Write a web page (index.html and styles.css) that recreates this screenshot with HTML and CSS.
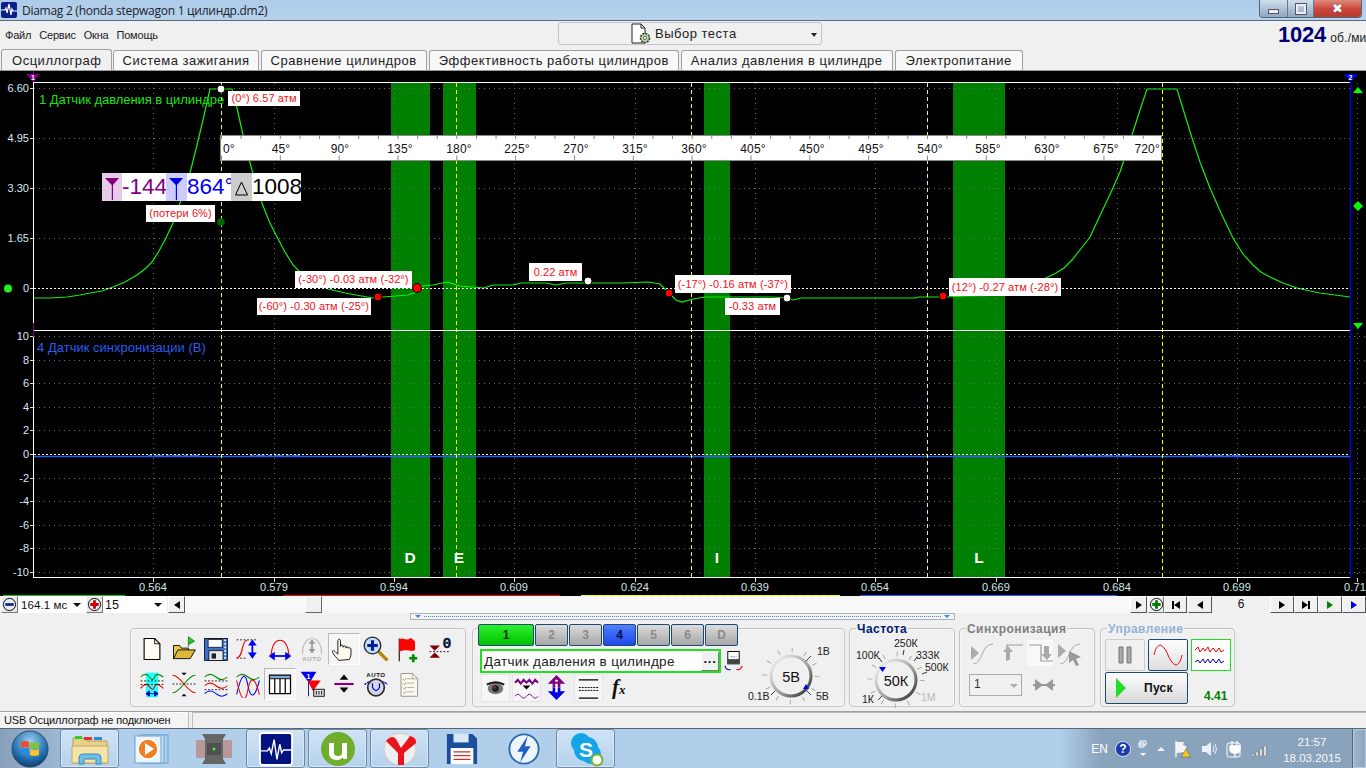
FILE: index.html
```html
<!DOCTYPE html>
<html lang="ru">
<head>
<meta charset="utf-8">
<title>Diamag 2</title>
<link rel="stylesheet" href="styles.css">
</head>
<body>
<div class="win">
  <header class="titlebar">
    <svg class="appicon" viewBox="0 0 16 16"><rect width="16" height="16" rx="2" fill="#0b1f8a"/><path d="M0 8h4l1-2 1 5 2-9 2 11 1-6 1 2h4" fill="none" stroke="#fff" stroke-width="1.2"/></svg>
    <span class="title">Diamag 2 (honda stepwagon 1 цилиндр.dm2)</span>
    <div class="winbtns">
      <div class="wb wb-min"><span class="minbar"></span></div>
      <div class="wb wb-max"><span class="maxbox"></span></div>
      <div class="wb wb-close">✖</div>
    </div>
  </header>

  <div class="topbar">
    <nav class="menu"><span>Файл</span><span>Сервис</span><span>Окна</span><span>Помощь</span></nav>
    <div class="testsel">
      <svg class="testicon" viewBox="0 0 22 22"><path d="M2 1h9l4 4v15H2z" fill="#fff" stroke="#222"/><path d="M11 1v4h4" fill="none" stroke="#222"/><circle cx="15" cy="15" r="4.5" fill="#b8d8a0" stroke="#333" stroke-width="1.6" stroke-dasharray="2 1"/><circle cx="15" cy="15" r="1.6" fill="#fff" stroke="#333" stroke-width=".7"/></svg>
      <span class="testlabel">Выбор теста</span>
      <span class="testarrow"></span>
    </div>
    <div class="rpm"><b>1024</b><span>об./ми</span></div>
  </div>

  <div class="tabs">
    <div class="tab tab-on">Осциллограф</div>
    <div class="tab">Система зажигания</div>
    <div class="tab">Сравнение цилиндров</div>
    <div class="tab">Эффективность работы цилиндров</div>
    <div class="tab">Анализ давления в цилиндре</div>
    <div class="tab">Электропитание</div>
  </div>

  <main class="plot">
    <svg class="scope" viewBox="0 71 1366 525" width="1366" height="525">
      <g fill="#008000">
        <rect x="391" y="83" width="39" height="494"/><rect x="443" y="83" width="33" height="494"/>
        <rect x="704" y="83" width="26" height="494"/><rect x="953" y="83" width="52" height="494"/>
      </g>
      <g class="grid">
        <path d="M34 88.5H1350M34 138.5H1350M34 188.5H1350M34 238.5H1350"/>
        <path d="M34 336.5H1366M34 360.5H1366M34 383.5H1366M34 407.5H1366M34 430.5H1366M34 478.5H1366M34 501.5H1366M34 525.5H1366M34 548.5H1366M34 572.5H1366"/>
        <path d="M153.5 83V577M274.5 83V577M394.5 83V577M514.5 83V577M635.5 83V577M755.5 83V577M875.5 83V577M996.5 83V577M1117.5 83V577M1237.5 83V577M1357.5 83V577"/>
      </g>
      <polyline class="sig" points="34,298 50,298 67,297 80,295 90,293 102,291 113,287 125,282 137,275 145,269 152,262 159,251 165,240 173,223 180,203 190,173 197,145 203,120 207,102 210,89 232,89 237,108 243,135 247,152 252,170 257,188 262,203 269,221 277,237 285,252 293,265 300,272 310,280 320,285 328,289 345,293 367,297 373,298 383,297 408,295 417,292 422,286 433,285 447,282 460,286 484,288 493,285 513,285 521,283 546,283 556,285 566,283 623,283 648,282 660,284 669,293 676,300 682,302 693,299 705,297 721,297 754,297 772,297 786,298 793,300 801,298 915,298 919,297 944,297 968,296 1010,295 1030,286 1040,281 1048,277 1056,273 1064,268 1072,260 1080,250 1090,237 1097,222 1105,205 1112,190 1120,172 1126,154 1132,135 1140,110 1147,89 1177,89 1184,112 1192,138 1200,162 1210,188 1221,213 1233,238 1243,254 1253,265 1261,272 1270,277 1283,283 1297,288 1310,291 1320,293 1335,295 1350,297"/>
      <path class="sig2" d="M34 456.5H1350"/>
      <path class="sig3" d="M148 455.5H200M250 455.5H300M362 455.5H366M1062 455.5H1132M1190 455.5H1245"/>
      <path class="zero" d="M34 288.5H1350M34 454.5H1350"/>
      <path class="cursor" d="M221.5 83V577M456.5 83V577M691.5 83V577M927.5 83V577M1162.5 83V577"/>
      <path class="whiteline" d="M33 82.5H1351M33 330.5H1351M33 577.5H1351"/>
      <path class="whiteaxis" d="M33.5 82V578"/>
      <path class="blueaxis" d="M1350.5 82V578"/>
      <path class="purple" d="M33.5 71V82M33.5 323V337"/>
      <g class="ticks">
        <path d="M30 88.5H33M30 138.5H33M30 188.5H33M30 238.5H33M30 288.5H33M30 336.5H33M30 360.5H33M30 383.5H33M30 407.5H33M30 430.5H33M30 454.5H33M30 478.5H33M30 501.5H33M30 525.5H33M30 548.5H33M30 572.5H33"/>
        <path d="M153.5 578V582M274.5 578V582M394.5 578V582M514.5 578V582M635.5 578V582M755.5 578V582M875.5 578V582M996.5 578V582M1117.5 578V582M1237.5 578V582M1357.5 578V582"/>
      </g>
      <g class="ylab">
        <text x="29" y="92">6.60</text><text x="29" y="142">4.95</text><text x="29" y="192">3.30</text><text x="29" y="242">1.65</text><text x="29" y="292">0</text>
        <text x="29" y="340">10</text><text x="29" y="364">8</text><text x="29" y="387">6</text><text x="29" y="411">4</text><text x="29" y="434">2</text><text x="29" y="458">0</text><text x="29" y="482">-2</text><text x="29" y="505">-4</text><text x="29" y="529">-6</text><text x="29" y="552">-8</text><text x="29" y="576">-10</text>
      </g>
      <g class="xlab">
        <text x="153" y="591">0.564</text><text x="274" y="591">0.579</text><text x="394" y="591">0.594</text><text x="514" y="591">0.609</text><text x="635" y="591">0.624</text><text x="755" y="591">0.639</text><text x="875" y="591">0.654</text><text x="996" y="591">0.669</text><text x="1117" y="591">0.684</text><text x="1237" y="591">0.699</text><text x="1355" y="591">0.71</text>
      </g>
      <g class="bandlab"><text x="410" y="563">D</text><text x="459" y="563">E</text><text x="717" y="563">I</text><text x="979" y="563">L</text></g>
      <text class="ch1" x="39" y="104">1 Датчик давления в цилиндре</text>
      <text class="ch4" x="37" y="352">4 Датчик синхронизации (В)</text>
      <path d="M26 74h14l-7 8z" fill="#800080"/><text class="tri" x="33" y="80">1</text>
      <path d="M1343 74h15l-7.500 8z" fill="#0000e0"/><text class="tri" x="1350.500" y="80">2</text>
      <circle cx="8" cy="288.500" r="4" fill="#22ee22"/>
      <path d="M1353 93l5-6 5 6z M1358 201l5 5-5 5-5-5z M1353 323h10l-5 6z" fill="#0f0"/>
      <path class="colbar" stroke="#0c0" d="M3 595.500H125"/>
      <path class="colbar" stroke="#f00" d="M283 595.500H560"/>
      <path class="colbar" stroke="#ff0" d="M581 595.500H840"/>
      <path class="colbar" stroke="#25f" d="M860 595.500H1117"/>
      <!-- ruler -->
      <rect class="rul" x="220.500" y="135.500" width="941" height="25"/>
      <path class="rt1" d="M221 137.500H1161"/>
      <path class="rt2" d="M221 158H1161"/>
      <g class="rlab">
        <text class="rs" x="223" y="153">0°</text><text x="281" y="153">45°</text><text x="340" y="153">90°</text><text x="400" y="153">135°</text><text x="459" y="153">180°</text><text x="517" y="153">225°</text><text x="576" y="153">270°</text><text x="635" y="153">315°</text><text x="694" y="153">360°</text><text x="753" y="153">405°</text><text x="812" y="153">450°</text><text x="871" y="153">495°</text><text x="930" y="153">540°</text><text x="988" y="153">585°</text><text x="1047" y="153">630°</text><text x="1106" y="153">675°</text><text class="re" x="1160" y="153">720°</text>
      </g>
      <circle cx="221" cy="222" r="3.800" fill="#006400"/>
      <g stroke="#000">
        <circle cx="221" cy="89" r="4" fill="#fff"/><circle cx="588" cy="281" r="4" fill="#fff"/><circle cx="787" cy="298" r="4" fill="#fff"/>
        <circle cx="378" cy="297" r="4" fill="#f00"/><circle cx="417" cy="288" r="4.500" fill="#f00"/><circle cx="669" cy="293" r="4" fill="#f00"/><circle cx="943" cy="296" r="4" fill="#f00"/>
      </g>
    </svg>
    <div class="tag t1">(0°) 6.57 атм</div>
    <div class="tag t2">(потери 6%)</div>
    <div class="tag t3">(-30°) -0.03 атм (-32°)</div>
    <div class="tag t4">(-60°) -0.30 атм (-25°)</div>
    <div class="tag t5">0.22 атм</div>
    <div class="tag t6">(-17°) -0.16 атм (-37°)</div>
    <div class="tag t7">-0.33 атм</div>
    <div class="tag t8">(12°) -0.27 атм (-28°)</div>
    <div class="cursors">
      <span class="cico ci-p"><svg viewBox="0 0 20 27" width="20" height="27"><path d="M3 5h14l-6 7v15H9.800V12z" fill="#800080"/></svg></span>
      <span class="cv cv-p">-144</span>
      <span class="cico ci-b"><svg viewBox="0 0 20 27" width="20" height="27"><path d="M3 5h14l-6 7v15H9.800V12z" fill="#0000e0"/></svg></span>
      <span class="cv cv-b">864°</span>
      <span class="cico ci-g"><svg viewBox="0 0 20 27" width="20" height="27"><path d="M10.500 9l6 13H4.500z" fill="none" stroke="#000"/></svg></span>
      <span class="cv cv-k">1008</span>
    </div>
  </main>

  <div class="nav">
    <span class="rnd"><svg viewBox="0 0 16 16"><circle cx="8" cy="8" r="6.500" fill="#e8eef8" stroke="#000"/><rect x="3.500" y="6.500" width="9" height="3" fill="#1a2a8a"/></svg></span>
    <span class="sel sel1">164.1 мс<i class="dn"></i></span>
    <span class="rnd"><svg viewBox="0 0 16 16"><circle cx="8" cy="8" r="6.500" fill="#e8eef8" stroke="#000"/><path d="M8 3.500v9M3.500 8h9" stroke="#c00" stroke-width="3"/></svg></span>
    <span class="sel sel2">15<i class="dn"></i></span>
    <span class="nb nb-s"><i class="lt"></i></span>
    <div class="track"><span class="thumb"></span></div>
    <span class="nb nb-s"><i class="rt"></i></span>
    <span class="rnd rnd2"><svg viewBox="0 0 16 16"><circle cx="8" cy="8" r="6.500" fill="#fff" stroke="#000"/><path d="M8 3.500v9M3.500 8h9" stroke="#008000" stroke-width="3"/></svg></span>
    <span class="nb nb-m"><b class="bar"></b><i class="lt"></i></span>
    <span class="nb nb-l"><i class="lt"></i></span>
    <span class="navnum">6</span>
    <span class="nb nb-l2"><i class="rt"></i></span>
    <span class="nb nb-l2"><i class="rt"></i><b class="bar"></b></span>
    <span class="nb nb-l2"><i class="rt rt-g"></i></span>
    <span class="nb nb-l2"><i class="rt rt-b"></i></span>
  </div>

  <div class="collapse"><i class="cu"></i><span class="cdots"></span><i class="cu"></i></div>

  <section class="panels">
    <div class="panel p-tools">
      <div class="tgrid">
        <span class="ti"><svg viewBox="0 0 32 32"><path d="M7 4h12l6 6v18H7z" fill="#fffbf0" stroke="#000" stroke-width="1.300"/><path d="M19 4v6h6" fill="none" stroke="#000"/></svg></span>
        <span class="ti"><svg viewBox="0 0 32 32"><path d="M21 14V2l7 5-7 4" fill="#2c2" stroke="#060" stroke-width=".8"/><path d="M4 27V12h7l2 3h8v5" fill="#e8c848" stroke="#000"/><path d="M4 27l5-10h20l-6 10z" fill="#d9b83a" stroke="#000"/></svg></span>
        <span class="ti"><svg viewBox="0 0 32 32"><rect x="3" y="4" width="26" height="25" fill="#3c70c8" stroke="#001" /><rect x="7" y="5" width="16" height="9" fill="#fff" stroke="#000" stroke-width=".8"/><rect x="8" y="18" width="16" height="11" fill="#e8e8e8" stroke="#000" stroke-width=".8"/><rect x="11" y="21" width="5" height="6" fill="#222"/><path d="M26.500 5v23" stroke="#fff" stroke-dasharray="2 2" stroke-width="2"/></svg></span>
        <span class="ti"><svg viewBox="0 0 32 32"><path d="M3 5.500h24M3 26.500h12" stroke="#000" stroke-dasharray="2 2"/><path d="M3 26c8 0 5-20 12-20" fill="none" stroke="#e00" stroke-width="1.300"/><path d="M21 9v14" stroke="#00e" stroke-width="2"/><path d="M16 12l5-7 5 7zM16 20l5 7 5-7z" fill="#00e"/></svg></span>
        <span class="ti"><svg viewBox="0 0 32 32"><path d="M6 24C6 0 26 0 26 24" fill="none" stroke="#e00" stroke-width="1.300"/><path d="M8 24h16" stroke="#00e" stroke-width="2"/><path d="M10 19l-7 5 7 5zM22 19l7 5-7 5z" fill="#00e"/></svg></span>
        <span class="ti"><svg viewBox="0 0 32 32"><path d="M5 22C5 -2 27 -2 27 22" fill="none" stroke="#bbb" stroke-width="1.300"/><path d="M16 8v10" stroke="#999" stroke-width="2"/><path d="M12 10l4-5 4 5zM12 16l4 5 4-5z" fill="#999"/><text class="svgauto" x="16" y="30">AUTO</text></svg></span>
        <span class="ti ti-on"><svg viewBox="0 0 32 32"><path d="M10 29c-2-3-5-5-7-9-1-2 1-3 3-1l3 3V7c0-3 3-3 3 0v6c0-2 3-2 3 0v1c0-2 3-2 3 0v1c0-2 3-2 3 0 2-1 3 0 3 2v4c0 3-1 5-2 7z" fill="#fffbf0" stroke="#000"/></svg></span>
        <span class="ti"><svg viewBox="0 0 32 32"><path d="M19 19l10 10" stroke="#b8860b" stroke-width="4"/><circle cx="12" cy="12" r="9.500" fill="#c8dcf4" stroke="#223" stroke-width="1.500"/><path d="M12 6v12M6 12h12" stroke="#00209a" stroke-width="3.500"/></svg></span>
        <span class="ti"><svg viewBox="0 0 32 32"><path d="M6 4v26" stroke="#000" stroke-width="1.200"/><path d="M6 5c5-3 8 3 13-2l5 4v10c-5 3-9-2-18 2z" fill="#f00"/><path d="M22 22v9M17.500 26.500h9" stroke="#080" stroke-width="3"/></svg></span>
        <span class="ti"><svg viewBox="0 0 32 32"><text class="svgzero" x="24" y="15">0</text><path d="M4 19h24" stroke="#000" stroke-dasharray="2 2"/><path d="M4 12h12l-6 6zM4 26h12l-6-6z" fill="#800000"/></svg></span>

        <span class="ti"><svg viewBox="0 0 32 32"><rect x="9" y="3" width="14" height="28" fill="#2ff"/><path d="M3 8q6-6 10 0t6 0 10 0" fill="none" stroke="#080" stroke-width="1.200"/><path d="M3 21q6-8 10-2t6 0 10 2" fill="none" stroke="#e00" stroke-width="1.200"/><path d="M3 12.500h26M3 16.500h26" stroke="#000" stroke-dasharray="2 2"/><path d="M11 27h10M9 27l4-3v6zM23 27l-4-3v6z" stroke="#00a" fill="#00a"/></svg></span>
        <span class="ti"><svg viewBox="0 0 32 32"><path d="M3 6c10 0 16 20 26 20" fill="none" stroke="#e00" stroke-width="1.200"/><path d="M3 26c10 0 16-20 26-20" fill="none" stroke="#080" stroke-width="1.200"/><path d="M3 16h26" stroke="#000" stroke-dasharray="2 2"/><path d="M13 3h6l-3 3zM13 30h6l-3-3z" fill="#000"/></svg></span>
        <span class="ti"><svg viewBox="0 0 32 32"><path d="M3 8q6-6 13 0t13 0" fill="none" stroke="#080" stroke-width="1.200"/><path d="M3 18q6-6 13 0t13 0" fill="none" stroke="#e00" stroke-width="1.200"/><path d="M3 27q6-6 13 0t13 0" fill="none" stroke="#00e" stroke-width="1.200"/><path d="M3 12.500h26M3 22.500h26" stroke="#000" stroke-dasharray="2 2"/></svg></span>
        <span class="ti"><svg viewBox="0 0 32 32"><path d="M3 8q6-6 13 0t13 0" fill="none" stroke="#080" stroke-width="1.200"/><path d="M3 28c6-26 10-26 13-10s8 14 13-6" fill="none" stroke="#00e" stroke-width="1.200"/><path d="M3 12c6 26 10 26 13 10s8-14 13 6" fill="none" stroke="#e00" stroke-width="1.200"/></svg></span>
        <span class="ti ti-on"><svg viewBox="0 0 32 32"><rect x="4" y="6" width="24" height="21" fill="#fff" stroke="#000" stroke-width="1.400"/><rect x="4" y="6" width="24" height="4" fill="#7fa8d0" stroke="#000"/><path d="M10 10v17M16 10v17M22 10v17" stroke="#000" stroke-width="1.400"/></svg></span>
        <span class="ti"><svg viewBox="0 0 32 32"><path d="M3 2h18l-8 13z" fill="#00e"/><path d="M11 12h15l-9 12z" fill="#f00"/><path d="M12 14v16" stroke="#00a"/><rect x="18" y="22" width="12" height="8" fill="#ddd" stroke="#000"/><path d="M21 24v4M24 24v4M27 24v4" stroke="#000"/><text class="svgmini" x="12" y="10">1</text></svg></span>
        <span class="ti"><svg viewBox="0 0 32 32"><path d="M5 16h22" stroke="#800080" stroke-width="2.500"/><path d="M11 11l5-6 5 6zM11 20h10l-5 6z" fill="#000"/></svg></span>
        <span class="ti"><svg viewBox="0 0 32 32"><text class="svgauto svgauto-k" x="16" y="8">AUTO</text><path d="M3 17c3-6 23-6 26 0" fill="none" stroke="#00e" stroke-width="1.500" stroke-dasharray="3 1"/><circle cx="16" cy="20" r="9.500" fill="#d8d8e8" stroke="#333" stroke-width="2"/><path d="M12 15v5q4 7 8 0v-5" fill="none" stroke="#00e" stroke-width="1.400"/></svg></span>
        <span class="ti"><svg viewBox="0 0 32 32"><path d="M8 4h13l6 6v20H8z" fill="#fdf8ea" stroke="#888"/><path d="M21 4v6h6M15 10h8M15 15h8M15 20h8M15 25h8" fill="none" stroke="#aaa"/><path d="M10 10l2 2 2-3M10 15l2 2 2-3M10 20l2 2 2-3M10 25l2 2 2-3" fill="none" stroke="#999"/></svg></span>
      </div>
    </div>

    <div class="panel p-chan">
      <div class="chcol">
        <div class="chbtns">
          <span class="ch ch-wide ch-g">1</span><span class="ch">2</span><span class="ch">3</span><span class="ch ch-b">4</span><span class="ch">5</span><span class="ch">6</span><span class="ch">D</span>
        </div>
        <div class="namerow">
          <div class="namebox"><span class="nametext">Датчик давления в цилиндре</span><span class="dots">···</span></div>
          <svg class="meter" viewBox="0 0 20 22"><rect x="4" y="1" width="12" height="13" fill="#fff" stroke="#000"/><rect x="4" y="9" width="12" height="5" fill="#444"/><path d="M7 6l3 1 3-1" stroke="#444" stroke-dasharray="1 1" fill="none"/><path d="M1 16q1 5 6 4" fill="none" stroke="#00a" stroke-width="1.200"/><path d="M19 16q-1 5-6 4" fill="none" stroke="#e00" stroke-width="1.200"/></svg>
        </div>
        <div class="chtools">
          <span class="ci ci-on"><svg viewBox="0 0 28 28"><ellipse cx="14" cy="14" rx="8" ry="6" fill="#777"/><circle cx="14" cy="14" r="3.500" fill="#222"/><path d="M5 10q9-5 18 0" stroke="#111" stroke-width="2" fill="none"/><circle cx="13" cy="13" r="1" fill="#e33"/></svg></span>
          <span class="ci ci-on"><svg viewBox="0 0 28 28"><path d="M2 8l3-3 3 4 3-4 3 3 3-3 3 4 3-4 3 3" fill="none" stroke="#800080" stroke-width="2"/><path d="M10 11h8l-4 4z" fill="#000"/><path d="M2 22q3-4 6 0t6 0 6 0 6 0" fill="none" stroke="#800080"/></svg></span>
          <span class="ci"><svg viewBox="0 0 28 28"><path d="M14 1l9 9h-5v4h-8v-4H5z" fill="#800080"/><path d="M14 27l9-9h-5v-4h-8v4H5z" fill="#00e"/><path d="M14 6v13" stroke="#fff" stroke-width="2.500" stroke-dasharray="2 2 9 2"/></svg></span>
          <span class="ci ci-on"><svg viewBox="0 0 28 28"><path d="M4 5h20M4 24h20" stroke="#000" stroke-width="1.300"/><path d="M4 13h20M4 16h20" stroke="#000" stroke-dasharray="2 1"/></svg></span>
          <span class="ci fx"><i>f</i><small>x</small></span>
        </div>
      </div>
      <svg class="dial" viewBox="745 628 100 79" width="100" height="79">
        <defs><linearGradient id="ring" x1="0" y1="0" x2="1" y2="1"><stop offset=".15" stop-color="#e4e4e4"/><stop offset=".6" stop-color="#999"/><stop offset="1" stop-color="#222"/></linearGradient></defs>
        <circle class="dticks" cx="791" cy="675" r="26"/>
        <path class="dt2" d="M805 661l6-6M806 689l5 5M776 689l-5 5"/>
        <circle class="dring" cx="791" cy="675" r="20"/>
        <text class="dval" x="791" y="681">5В</text>
        <path d="M803 688l3-5 3 5z" fill="#00e"/>
        <text class="dl" x="817" y="654">1В</text><text class="dl" x="816" y="699">5В</text><text class="dl" x="748" y="699">0.1В</text>
      </svg>
    </div>

    <div class="panel p-freq">
      <span class="legend lg-navy">Частота</span>
      <svg class="dial" viewBox="849 628 105 79" width="105" height="79">
        <circle class="dticks" cx="895" cy="679" r="26"/>
        <path class="dt2" d="M881 661l-3-4M902 654l1-5M913 660l3-4M921 673l5-2M881 695l-4 4"/>
        <circle class="dring" cx="895" cy="679" r="20"/>
        <text class="dval" x="895" y="685">50К</text>
        <path d="M878 666h7l-3.500 5z" fill="#00e"/>
        <text class="dl" x="855" y="658">100К</text><text class="dl" x="893" y="646">250К</text><text class="dl" x="915" y="658">333К</text><text class="dl" x="924" y="670">500К</text><text class="dl" x="861" y="702">1К</text><text class="dl dl-off" x="920" y="700">1М</text>
      </svg>
    </div>

    <div class="panel p-sync">
      <span class="legend lg-gray">Синхронизация</span>
      <div class="syncrow">
        <span class="si"><svg viewBox="0 0 26 26"><path d="M2 6l8 7-8 7z" fill="#aaa"/><path d="M4 24c10 0 8-20 20-20" fill="none" stroke="#aaa"/></svg></span>
        <span class="si"><svg viewBox="0 0 26 26"><path d="M9 21V5h16" fill="none" stroke="#999" stroke-width="1.200"/><path d="M5 12l5-6 5 6h-3v8H8v-8z" fill="#aaa"/></svg></span>
        <span class="si si-on"><svg viewBox="0 0 26 26"><path d="M2 5h12v16h12" fill="none" stroke="#999" stroke-width="1.200"/><path d="M14 14l6 6 5-6h-3V6h-5v8z" fill="#aaa"/></svg></span>
        <span class="si"><svg viewBox="0 0 26 26"><path d="M2 4l8 7-8 7z" fill="#aaa"/><path d="M4 24c10 0 8-20 20-20" fill="none" stroke="#aaa"/><path d="M13 11l12 6-5 2 3 6-3 1-3-6-4 3z" fill="#999"/></svg></span>
      </div>
      <div class="syncrow2">
        <span class="syncsel">1<i class="dng"></i></span>
        <svg class="syncb" viewBox="0 0 24 14"><path d="M1 7h22" stroke="#999" stroke-width="2"/><path d="M3 1l8 6-8 6zM21 1l-8 6 8 6z" fill="#999"/></svg>
      </div>
    </div>

    <div class="panel p-ctl">
      <span class="legend lg-blue">Управление</span>
      <div class="ctlrow">
        <span class="cb cb-pause"><svg viewBox="0 0 20 20" width="20" height="20"><path d="M4 2h4v16H4zM12 2h4v16h-4z" fill="#aaa" stroke="#777"/></svg></span>
        <span class="cb cb-sine"><svg viewBox="0 0 32 24" width="32" height="24"><path d="M2 12C5 -2 11 0 16 12s11 14 14 0" fill="none" stroke="#e00"/></svg></span>
        <span class="cb cb-wave"><svg viewBox="0 0 36 26" width="36" height="26"><path d="M2 8l3-3 2 5 3-4 2 3 3-4 2 5 3-4 3 4 3-4 2 4 3-2" fill="none" stroke="#e00"/><path d="M2 20l3-2 2 3 3-4 2 4 3-4 2 4 3-4 3 4 3-4 2 4 3-2" fill="none" stroke="#00a"/></svg></span>
      </div>
      <div class="ctlrow2">
        <span class="runbtn"><i class="play"></i><b>Пуск</b></span>
        <span class="ver">4.41</span>
      </div>
    </div>
  </section>

  <div class="status"><span class="st1">USB Осциллограф не подключен</span><span class="st2"></span></div>

  <footer class="taskbar">
    <span class="orb"><svg viewBox="0 0 40 40" width="40" height="40"><defs><radialGradient id="orbg" cx=".5" cy=".3" r=".8"><stop offset="0" stop-color="#9fd0f0"/><stop offset=".6" stop-color="#1f6fb0"/><stop offset="1" stop-color="#0a2a50"/></radialGradient></defs><circle cx="20" cy="20" r="18" fill="url(#orbg)" stroke="#33485e"/><path d="M11 13q4-2 8 0v6q-4-2-8 0z" fill="#f24a24"/><path d="M20 13q4 2 9 0v6q-5 2-9 0z" fill="#7cc43a"/><path d="M11 20q4-2 8 0v6q-4-2-8 0z" fill="#2a8ae0"/><path d="M20 20q4 2 9 0v6q-5 2-9 0z" fill="#f7c22a"/></svg></span>
    <span class="tb tb-box"><svg viewBox="0 0 40 34" width="40" height="34"><path d="M3 6h12l2 3h20v22H3z" fill="#e8d088" stroke="#b89a50"/><path d="M5 4h7v3H5z" fill="#3c3"/><path d="M14 5h8v3h-8z" fill="#d33"/><path d="M24 5h8v3h-8z" fill="#38c"/><path d="M2 14h36v17H2z" fill="#f4e4a8" stroke="#c0a860"/><path d="M9 32v-6q0-4 4-4h14q4 0 4 4v6h-5v-5H14v5z" fill="#6cc0e8" stroke="#3a88b8"/></svg></span>
    <span class="tb"><svg viewBox="0 0 40 34" width="40" height="34"><rect x="12" y="3" width="24" height="28" fill="#a8d0f0" stroke="#6aa0d0"/><rect x="8" y="3" width="24" height="28" fill="#c8e2f8" stroke="#6aa0d0"/><rect x="3" y="4" width="26" height="27" fill="#e8f4ff" stroke="#6aa0d0"/><circle cx="16" cy="17" r="10" fill="#f08020" stroke="#fff" stroke-width="1.500"/><path d="M13 11l9 6-9 6z" fill="#fff"/></svg></span>
    <span class="tb"><svg viewBox="0 0 40 34" width="40" height="34"><rect x="2" y="8" width="36" height="18" fill="#b89898"/><path d="M8 2h24l-3 5v20l3 5H8l3-5V7z" fill="#666"/><rect x="13" y="11" width="14" height="12" fill="#505050"/><circle cx="20" cy="17" r="1.500" fill="#4e4"/></svg></span>
    <span class="tb tb-box tb-act"><svg viewBox="0 0 36 36" width="34" height="34"><rect x="1" y="1" width="34" height="34" rx="3" fill="#02127e" stroke="#fff" stroke-width="2"/><path d="M1 20h8l2-3 2 6 3-15 3 21 3-16 2 9 2-3h9" fill="none" stroke="#fff" stroke-width="1.500"/></svg></span>
    <span class="tb tb-box"><svg viewBox="0 0 36 36" width="36" height="36"><circle cx="18" cy="18" r="17" fill="#6fae2c"/><path d="M9 12h5v10q0 3 4 3t4-3V12h5v16h-4v-2q-2 3-6 3-8 0-8-7z" fill="#fff"/></svg></span>
    <span class="tb tb-box"><svg viewBox="0 0 36 36" width="36" height="36"><circle cx="18" cy="18" r="16" fill="#eee" stroke="#ccc"/><path d="M4 10q6-7 10-2l5 9 9-12q7 2 6 7L22 22v12h-6V22z" fill="#e8141c"/></svg></span>
    <span class="tb"><svg viewBox="0 0 36 36" width="36" height="34"><path d="M2 2h27l5 5v27H2z" fill="#1b4f9c"/><rect x="9" y="2" width="16" height="9" fill="#d8e8f8"/><rect x="6" y="17" width="24" height="17" fill="#fff"/><path d="M9 21h18M9 25h18M9 29h18" stroke="#c33" stroke-width="1.500"/></svg></span>
    <span class="tb"><svg viewBox="0 0 36 36" width="34" height="34"><circle cx="18" cy="18" r="15.500" fill="#eef5fb" stroke="#2a6ab0" stroke-width="2"/><path d="M22 4L11 21h6l-3 11 11-17h-6z" fill="#1f5fc8"/></svg></span>
    <span class="tb tb-box"><svg viewBox="0 0 36 36" width="36" height="36"><circle cx="13" cy="12" r="10" fill="#14a5e8"/><circle cx="23" cy="23" r="10" fill="#14a5e8"/><rect x="6" y="6" width="24" height="24" rx="11" fill="#14a5e8"/><text class="svgskype" x="18" y="26">S</text><circle cx="29" cy="29" r="5.500" fill="#fff" stroke="#7ab32a" stroke-width="2"/></svg></span>
    <div class="tray">
      <span class="lang">EN</span>
      <svg class="trico" viewBox="0 0 16 16" width="16" height="16"><circle cx="8" cy="8" r="7.500" fill="#1a3ab0" stroke="#cde"/><text class="svgq" x="8" y="12">?</text></svg>
      <svg class="trico tr2" viewBox="0 0 10 18" width="10" height="18"><path d="M2 1h6v4H2zM1 3h5v4H1z" fill="none" stroke="#fff"/><path d="M2 13h6l-3 3z" fill="#fff"/></svg>
      <i class="trup"></i>
      <svg class="trico tr-flag" viewBox="0 0 18 18" width="18" height="18"><path d="M3 1v16" stroke="#fff" stroke-width="1.300"/><path d="M3 2h8l-1 3 3 1v6l-10 1z" fill="#f4f4f4"/><path d="M13 9l5 8H8z" fill="#f4c420" stroke="#555" stroke-width=".5"/></svg>
      <svg class="trico" viewBox="0 0 18 18" width="18" height="18"><path d="M1 6h4l5-4v14l-5-4H1z" fill="#eef"/><path d="M12 6q2 3 0 6M14 4q3 5 0 10" fill="none" stroke="#eef"/></svg>
      <svg class="trico" viewBox="0 0 18 18" width="18" height="18"><rect x="1" y="3" width="13" height="14" rx="2" fill="none" stroke="#fff"/><path d="M6 1v5M11 1v5M4 6h10v4q0 3-5 3t-5-3zM9 13v4" fill="#fff" stroke="#fff" stroke-width="1.300"/></svg>
      <svg class="trico" viewBox="0 0 18 16" width="18" height="16"><path d="M1 15v-2h2v2zM5 15v-4h2v4zM9 15V8h2v7zM13 15V5h2v10z" fill="#fff" stroke="#555" stroke-width=".4"/></svg>
      <div class="clock"><span>21:57</span><span>18.03.2015</span></div>
      <span class="showdesk"></span>
    </div>
  </footer>
</div>
</body>
</html>
```
FILE: styles.css
```css
* { box-sizing: border-box; }
html, body { margin: 0; padding: 0; background: #f0f0f0; }
body { font-family: "Liberation Sans", Arial, sans-serif; color: #111; }
i, b, small { font-style: normal; }
.win { width: 1366px; height: 768px; display: flex; flex-direction: column; overflow: hidden; background: #f0f0f0; }

.titlebar { height: 21px; flex: none; display: flex; align-items: center; position: relative; padding-left: 1px; background: linear-gradient(#adcce9, #b6d2ec); border-bottom: 1px solid #5a6a7a; }
.appicon { width: 16px; height: 16px; }
.title { margin-left: 5px; font: 12px "Open Sans", "Noto Sans", sans-serif; color: #1c1c2c; letter-spacing: -.27px; white-space: nowrap; }
.winbtns { position: absolute; right: 4px; top: 0; height: 18px; display: flex; border: 1px solid #55667a; border-top: 0; border-radius: 0 0 4px 4px; overflow: hidden; }
.wb { display: flex; align-items: center; justify-content: center; height: 17px; color: #fff; font-size: 13px; border-right: 1px solid #6a7a8e; background: linear-gradient(#cfdfee, #8fa6bf); }
.wb-min { width: 28px; }
.wb-max { width: 26px; }
.wb-close { width: 47px; border-right: 0; background: linear-gradient(#e08a7c 0, #c8443a 55%, #b83a30); text-shadow: 0 0 1px #333; }
.minbar { width: 11px; height: 5px; margin-top: 6px; background: #e8eef4; border: 1px solid #556; }
.maxbox { width: 10px; height: 10px; background: transparent; border: 2px solid #e8eef4; outline: 1px solid #556; }

.topbar { height: 29px; flex: none; display: flex; position: relative; align-items: flex-start; }
.menu { display: flex; gap: 8px; padding: 8px 0 0 5px; font-size: 11px; letter-spacing: -.2px; width: 558px; flex: none; color: #222; }
.testsel { width: 264px; height: 23px; margin-top: 1px; border: 1px solid #c4c4c4; border-radius: 3px; display: flex; align-items: center; position: relative; padding-left: 71px; background: #f0f0f0; }
.testicon { width: 22px; height: 22px; }
.testlabel { font-size: 13px; margin-left: 3px; letter-spacing: .5px; color: #222; }
.testarrow { position: absolute; right: 4px; top: 10px; border: 3px solid transparent; border-top: 4px solid #222; }
.rpm { position: absolute; left: 1278px; top: 1px; display: flex; align-items: baseline; white-space: nowrap; color: #00006e; width: 88px; }
.rpm b { font-size: 22px; letter-spacing: -.2px; margin-right: 4px; }
.rpm span { font-size: 12px; color: #222; letter-spacing: .2px; }

.tabs { height: 21px; flex: none; display: flex; gap: 2px; padding-left: 1px; align-items: flex-end; border-bottom: 1px solid #9a9a9a; }
.tab { height: 20px; padding: 0 9px; display: flex; align-items: center; font-size: 13px; letter-spacing: .52px; color: #222; border: 1px solid #a0a0a0; border-bottom: 0; border-radius: 3px 3px 0 0; background: #f8f8f8; white-space: nowrap; }
.tab-on { height: 21px; background: #f0f0f0; padding: 0 10px; margin-right: -1px; }
.tab:nth-child(2) { padding: 0 8px; }
.tab:last-child { padding: 0 10px; }

.plot { height: 525px; flex: none; position: relative; background: #000; overflow: hidden; }
.scope { display: block; }
.grid path { stroke: #6a6a6a; stroke-width: 1; stroke-dasharray: 1 4; fill: none; }
.sig { fill: none; stroke: #10f010; stroke-width: 1.200; }
.sig2 { stroke: #2a60f0; stroke-width: 1.500; fill: none; }
.sig3 { stroke: #2a60f0; stroke-width: 1.500; stroke-dasharray: 4 2 9 3; fill: none; }
.zero { stroke: #fff; stroke-dasharray: 2 2; fill: none; }
.cursor { stroke: #ff0; stroke-dasharray: 4 3; fill: none; }
.whiteline { stroke: #fff; fill: none; }
.whiteaxis { stroke: #fff; fill: none; stroke-width: 1; }
.blueaxis { stroke: #0000f0; stroke-width: 1.300; fill: none; }
.purple { stroke: #800080; fill: none; }
.ticks path { stroke: #ddd; fill: none; }
.ylab text { font: 11px "Liberation Sans", sans-serif; fill: #d6e8f6; text-anchor: end; }
.xlab text { font: 11px "Liberation Sans", sans-serif; fill: #cfe8e8; text-anchor: middle; letter-spacing: .1px; }
.bandlab text { font: bold 15.500px "Liberation Sans", sans-serif; fill: #fff; text-anchor: middle; }
.ch1 { font: 13px "Liberation Sans", sans-serif; fill: #1ce01c; letter-spacing: -.05px; }
.ch4 { font: 13px "Liberation Sans", sans-serif; fill: #2a5cf0; letter-spacing: .02px; }
.tri { font: bold 7px "Liberation Sans", sans-serif; fill: #fff; text-anchor: middle; }
.colbar { stroke-width: 1; fill: none; }
.rul { fill: #fff; stroke: #8c8c8c; }
.rt1 { stroke: #888; stroke-width: 3; stroke-dasharray: 1 18.610; fill: none; }
.rt2 { stroke: #888; stroke-width: 5; stroke-dasharray: 1 57.830; fill: none; }
.rlab text { font: 12px "Liberation Sans", sans-serif; fill: #111; text-anchor: middle; letter-spacing: .2px; }
.rlab .rs { text-anchor: start; }
.rlab .re { text-anchor: end; }

.tag { position: absolute; background: #fff; color: #f01020; font-size: 11px; height: 17px; line-height: 17px; text-align: center; white-space: nowrap; letter-spacing: .1px; }
.t1 { left: 228px; top: 20px; width: 72px; height: 15px; line-height: 15px; }
.t2 { left: 146px; top: 134px; width: 69px; }
.t3 { left: 295px; top: 200px; width: 117px; }
.t4 { left: 257px; top: 227px; width: 114px; }
.t5 { left: 529px; top: 192px; width: 53px; height: 18px; line-height: 18px; }
.t6 { left: 675px; top: 204px; width: 116px; height: 18px; line-height: 18px; }
.t7 { left: 725px; top: 227px; width: 55px; }
.t8 { left: 949px; top: 207px; width: 112px; height: 18px; line-height: 18px; }

.cursors { position: absolute; left: 102px; top: 102px; height: 28px; display: flex; font-size: 22.500px; line-height: 28px; }
.cico { width: 20px; height: 28px; display: block; }
.cv { background: #fff; white-space: nowrap; }
.ci-p { background: #e6cce6; }
.ci-b { background: #ccccff; width: 21px; }
.ci-g { background: #cccccc; width: 21px; }
.cv-p { color: #800080; width: 44px; }
.cv-b { color: #0000f0; width: 44px; }
.cv-k { color: #000; width: 49px; }

.nav { height: 17px; flex: none; display: flex; align-items: stretch; padding-left: 1px; font-size: 12px; background: #f0f0f0; }
.rnd { width: 17px; height: 17px; display: block; background: #e8e8e8; border: 1px solid; border-color: #fff #777 #777 #fff; }
.rnd svg { display: block; width: 15px; height: 15px; }
.rnd2 { margin-left: 1px; background: #f0f0f0; width: 16px; }
.sel { background: #fff; display: flex; align-items: center; position: relative; padding-left: 3px; font-size: 11.500px; letter-spacing: .1px; }
.sel1 { width: 68px; }
.sel2 { width: 64px; margin-right: 1px; padding-left: 2px; font-size: 12.500px; }
.dn { position: absolute; right: 5px; top: 7px; border: 4px solid transparent; border-top: 4px solid #111; border-bottom: 0; }
.nb { height: 17px; display: flex; align-items: center; justify-content: center; background: #f0f0f0; border: 1px solid; border-color: #fff #555 #555 #fff; flex: none; }
.nb-s { width: 17px; }
.nb-m { width: 23px; }
.nb-l { width: 24px; margin-left: 1px; }
.nb-l2 { width: 24px; margin-left: 0; }
.lt { border: 4px solid transparent; border-right: 6px solid #000; border-left: 0; }
.rt { border: 4px solid transparent; border-left: 6px solid #000; border-right: 0; }
.rt-g { border-left-color: #008000; }
.rt-b { border-left-color: #0000e0; }
.bar { width: 2px; height: 8px; background: #000; }
.track { flex: 1; position: relative; background: repeating-conic-gradient(#f2f2f2 0 25%, #fff 0 50%) 0 0 / 2px 2px; }
.thumb { position: absolute; left: 120px; top: 0; width: 17px; height: 17px; background: #f0f0f0; border: 1px solid; border-color: #fff #666 #666 #fff; }
.navnum { width: 58px; text-align: center; line-height: 17px; font-size: 12px; }

.collapse { height: 7px; flex: none; margin: 0 411px 0 410px; border: 1px solid #b0b0b0; display: flex; align-items: center; gap: 3px; padding: 0 4px; background: #f4f4f4; }
.cu { border: 3px solid transparent; border-top: 3px solid #3a88e0; border-bottom: 0; }
.cdots { flex: 1; height: 1px; border-top: 1px dotted #3a88e0; }

.panels { height: 91px; flex: none; display: flex; align-items: flex-start; padding: 8px 0 0 130px; }
.panel { height: 79px; border: 1px solid #c4c4c4; border-radius: 4px; position: relative; flex: none; box-shadow: inset 0 0 0 1px #f6f6f6; }
.p-tools { width: 336px; margin-right: 6px; padding: 4px 0 0 5px; }
.tgrid { display: grid; grid-template-columns: repeat(10, 32px); grid-auto-rows: 32px; row-gap: 3px; }
.ti { width: 32px; height: 32px; display: block; }
.ti svg { display: block; width: 32px; height: 32px; padding: 2px; }
.ti-on { background: #f6f6f6; border: 1px solid #bbb; border-right-color: #fff; border-bottom-color: #fff; }
.ti-on svg { width: 30px; height: 30px; padding: 1px; }
.svgauto { font: bold 7px "Liberation Sans", sans-serif; fill: #aaa; text-anchor: middle; letter-spacing: .6px; }
.svgauto-k { fill: #111; }
.svgzero { font: bold 17px "Liberation Mono", monospace; fill: #111; text-anchor: middle; stroke: #00208a; stroke-width: .4; }
.svgmini { font: bold 8px "Liberation Sans", sans-serif; fill: #fff; text-anchor: middle; }
.svgskype { font: bold 21px "Liberation Sans", sans-serif; fill: #fff; text-anchor: middle; }
.svgq { font: bold 12px "Liberation Sans", sans-serif; fill: #fff; text-anchor: middle; }

.p-chan { width: 373px; margin-right: 4px; display: flex; padding-left: 5px; }
.chcol { width: 267px; flex: none; margin-top: -5px; }
.chbtns { display: flex; gap: 1px; }
.ch { width: 33px; height: 22px; display: flex; align-items: center; justify-content: center; border: 1px solid #1c4a78; border-radius: 2px; font-size: 12px; font-weight: bold; color: #8a8a8a; background: linear-gradient(#dcdcdc, #a6a6a6); }
.ch-wide { width: 56px; }
.ch-g { background: linear-gradient(#2cf02c, #00c000); color: #003000; }
.ch-b { background: linear-gradient(#5080ff, #1c48e8); color: #001040; }
.namerow { display: flex; align-items: center; margin-top: 3px; padding-left: 2px; }
.namebox { width: 241px; height: 24px; background: #fff; border: 1px solid #20e020; box-shadow: inset 0 0 0 1px #20e020; position: relative; display: flex; align-items: center; padding-left: 3px; }
.nametext { font-size: 13.500px; letter-spacing: .32px; color: #222; white-space: nowrap; }
.dots { position: absolute; right: 1px; top: 2px; width: 18px; height: 19px; text-align: center; line-height: 17px; font-weight: bold; font-size: 13px; background: #f0f0f0; border: 1px solid; border-color: #fff #777 #777 #fff; }
.meter { width: 19px; height: 22px; margin-left: 3px; }
.chtools { display: flex; gap: 2px; margin-top: 1px; padding-left: 3px; }
.ci { width: 29px; height: 28px; display: block; }
.ci svg { display: block; width: 27px; height: 27px; }
.ci-on { background: #f6f6f6; border: 1px solid #e4e4e4; }
.fx { font: bold 21px "Liberation Serif", serif; padding-left: 7px; line-height: 27px; }
.fx i { font-style: italic; }
.fx small { font-size: 13px; font-style: italic; }
.dial { display: block; flex: none; }
.dticks { fill: none; stroke: #aaa; stroke-width: 5; stroke-dasharray: 1 12.610; }
.dt2 { stroke: #333; fill: none; }
.dring { fill: #f0f0f0; stroke: url(#ring); stroke-width: 3; }
.dval { font: 14.500px "Liberation Sans", sans-serif; fill: #111; text-anchor: middle; }
.dl { font: 10.500px "Liberation Sans", sans-serif; fill: #222; }
.dl-off { fill: #b8b8b8; }

.legend { position: absolute; top: -6px; left: 6px; padding: 0 1px; background: #f0f0f0; font-size: 12px; font-weight: bold; letter-spacing: .45px; white-space: nowrap; line-height: 12px; }
.lg-navy { color: #00206e; }
.lg-gray { color: #808080; }
.lg-blue { color: #95b3d4; }
.p-freq { width: 106px; margin-right: 4px; }
.p-sync { width: 136px; margin-right: 5px; padding: 11px 0 0 9px; }
.syncrow { display: flex; gap: 3px; }
.si { width: 26px; height: 26px; display: block; }
.si svg { display: block; width: 26px; height: 26px; }
.si-on { background: repeating-conic-gradient(#f2f2f2 0 25%, #fff 0 50%) 0 0 / 2px 2px; }
.syncrow2 { display: flex; align-items: center; margin-top: 8px; }
.syncsel { width: 53px; height: 22px; border: 1px solid #aaa; position: relative; padding-left: 4px; font-size: 12px; line-height: 18px; color: #333; }
.dng { position: absolute; right: 3px; top: 9px; border: 4px solid transparent; border-top: 4px solid #aaa; border-bottom: 0; }
.syncb { width: 24px; height: 14px; margin-left: 10px; }

.p-ctl { width: 135px; padding: 10px 0 0 4px; }
.ctlrow { display: flex; gap: 3px; }
.cb { width: 40px; height: 32px; display: flex; align-items: center; justify-content: center; }
.cb-pause { border: 1px solid #ccc; border-radius: 2px; }
.cb-sine { border: 1px solid #1c4a78; border-radius: 2px; background: linear-gradient(#fff, #ddd); }
.cb-wave { border: 1px solid #22dd22; background: #fff; }
.ctlrow2 { display: flex; margin-top: 1px; }
.runbtn { width: 83px; height: 32px; border: 1px solid #1c4a78; border-radius: 2px; background: linear-gradient(#fdfdfd, #d8d8d8); display: flex; align-items: center; padding-left: 10px; }
.play { border: 10px solid transparent; border-left: 10px solid #22dd22; border-right: 0; }
.runbtn b { font-size: 12px; margin-left: 18px; letter-spacing: .3px; }
.ver { font-size: 12px; font-weight: bold; color: #008000; margin: 17px 0 0 16px; }

.status { height: 17px; flex: none; display: flex; gap: 3px; font-size: 11px; letter-spacing: -.14px; border-top: 1px solid #a0a0a0; }
.st1 { width: 189px; padding: 2px 0 0 4px; border-right: 1px solid #bbb; box-shadow: inset 0 1px 0 #fff; white-space: nowrap; background: #f4f4f4; }
.st2 { flex: 1; border-left: 1px solid #bbb; border-top: 1px solid #bbb; }

.taskbar { height: 40px; flex: none; display: flex; align-items: stretch; position: relative; gap: 3px; padding-left: 60px; background: linear-gradient(90deg, #87a0bb 0, #b1cfeb 120px, #b1cfeb 1060px, #8aa3bd 1100px); border-top: 1px solid #55667a; }
.orb { position: absolute; left: 10px; top: 0; }
.tb { width: 59px; display: flex; align-items: center; justify-content: center; border: 1px solid transparent; border-radius: 3px; }
.tb-box { border-color: #6f89a5; background: linear-gradient(#cfe3f6, #b6d2ec); box-shadow: inset 0 0 0 1px #d8e8f6; }
.tray { position: absolute; right: 0; top: 0; height: 39px; display: flex; align-items: center; color: #fff; }
.lang { font-size: 12px; margin-right: 7px; }
.trico { display: block; margin-right: 7px; }
.tr2 { margin: 0 9px 0 0; }
.tr-flag { margin-right: 10px; }
.trup { border: 4px solid transparent; border-bottom: 4px solid #eef; border-top: 0; margin-right: 8px; }
.clock { display: flex; flex-direction: column; align-items: center; width: 64px; font-size: 11.500px; line-height: 16px; margin: 2px 0 0 4px; color: #f4f8fc; }
.showdesk { width: 14px; height: 39px; margin-left: 8px; background: linear-gradient(90deg, #a0b6cc, #8ba5bf); border-left: 1px solid #55667a; box-shadow: inset 0 0 0 1px #b6c8da; }
```
